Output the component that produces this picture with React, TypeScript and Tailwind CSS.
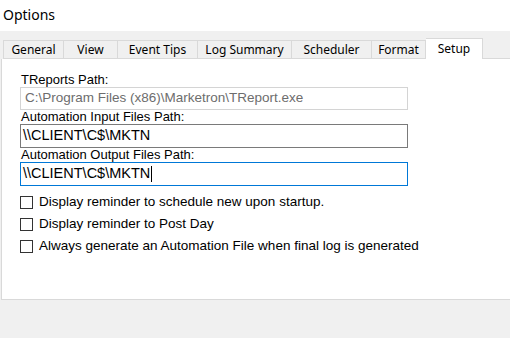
const tabs = [
  { label: 'General', w: 'w-[61px]' },
  { label: 'View', w: 'w-[54px]' },
  { label: 'Event Tips', w: 'w-[80px]' },
  { label: 'Log Summary', w: 'w-[94px]' },
  { label: 'Scheduler', w: 'w-[80px]' },
  { label: 'Format', w: 'w-[54px]' },
];

const checks = [
  'Display reminder to schedule new upon startup.',
  'Display reminder to Post Day',
  'Always generate an Automation File when final log is generated',
];

function Field({ label, value, kind }: { label: string; value: string; kind: 'disabled' | 'normal' | 'focus' }) {
  const box =
    kind === 'disabled'
      ? 'h-[23px] border-[#d4d4d4] text-[#6d6d6d] text-[13.5px] pl-[4px]'
      : kind === 'focus'
        ? 'h-[24px] border-[#0078d7] text-black text-[14.5px] pl-[2px]'
        : 'h-[24px] border-[#7a7a7a] text-black text-[14.5px] pl-[2px]';
  return (
    <div className="flex flex-col">
      <div className="h-[14px] pl-[1px] text-[13px] leading-[14px] text-black">{label}</div>
      <div className={`flex w-[388px] items-center border bg-white ${box}`}>
        <span>{value}</span>
        {kind === 'focus' && <span className="ml-[1px] h-[16px] w-px bg-black" />}
      </div>
    </div>
  );
}

export default function App() {
  return (
    <div
      className="flex h-[338px] w-[510px] flex-col overflow-hidden bg-[#f0f0f0]"
      style={{ fontFamily: '"Liberation Sans", Arial, sans-serif' }}
    >
      <div className="h-[31px] bg-white pl-[3px] pt-[5px] text-[14px] leading-[19px] text-black" style={{ fontFamily: '"Noto Sans", sans-serif' }}>
        Options
      </div>

      <div className="flex h-[28px] items-end pl-[3px]" style={{ fontFamily: '"Noto Sans", sans-serif' }}>
        {tabs.map((t, i) => (
          <div
            key={t.label}
            className={`flex h-[19px] items-center justify-center border-b border-t border-r border-[#d9d9d9] bg-[#f0f0f0] text-[12px] text-black ${t.w} ${i === 0 ? 'border-l' : ''}`}
          >
            {t.label}
          </div>
        ))}
        <div className="flex h-[21px] w-[57px] items-start justify-center border-r border-t border-[#d9d9d9] bg-white pt-[1px] text-[12px] text-black">
          Setup
        </div>
        <div className="h-px flex-1 bg-[#d9d9d9]" />
      </div>

      <div className="ml-[1px] flex h-[241px] flex-col border-b border-l border-[#d9d9d9] bg-white pl-[18px] pt-[14px]">
        <Field label="TReports Path:" value="C:\Program Files (x86)\Marketron\TReport.exe" kind="disabled" />
        <Field label="Automation Input Files Path:" value="\\CLIENT\C$\MKTN" kind="normal" />
        <Field label="Automation Output Files Path:" value="\\CLIENT\C$\MKTN" kind="focus" />

        <div className="mt-[10px] flex flex-col gap-[9px]">
          {checks.map((c) => (
            <label key={c} className="flex h-[13px] items-center gap-[6px] text-[13.5px] text-black">
              <span className="h-[13px] w-[13px] shrink-0 border border-[#333333] bg-white" />
              <span>{c}</span>
            </label>
          ))}
        </div>
      </div>
    </div>
  );
}
